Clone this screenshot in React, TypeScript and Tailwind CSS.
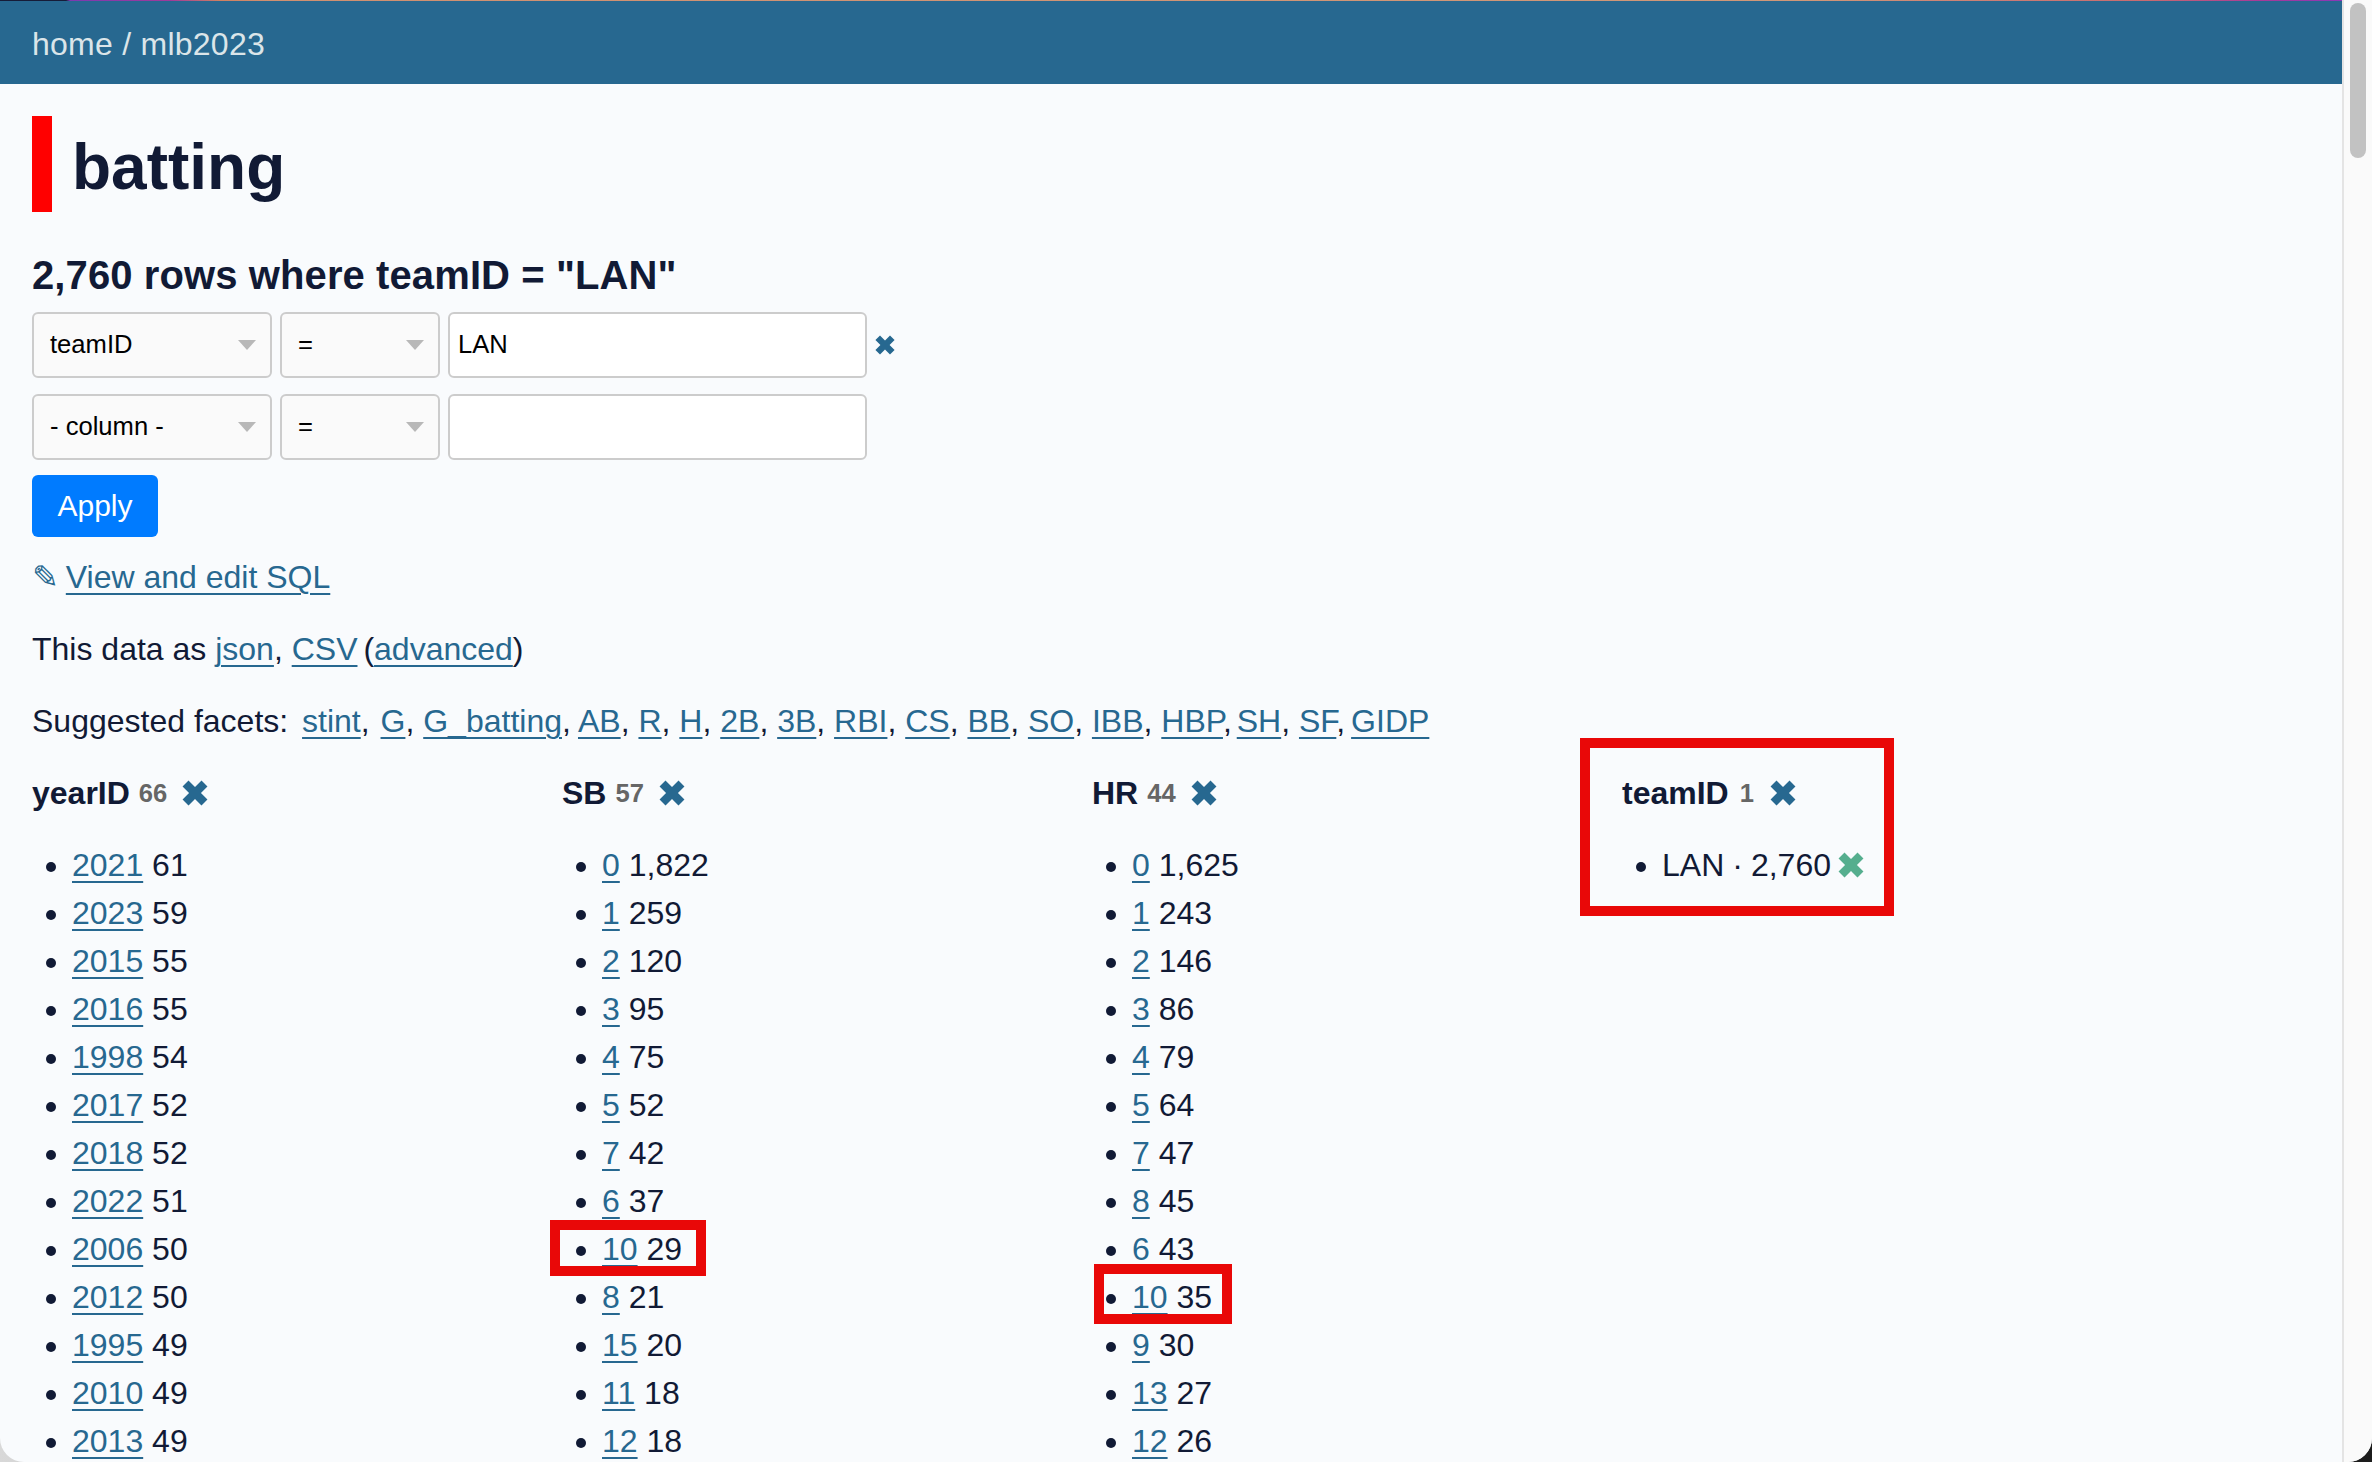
import React from 'react';

const yearFacet = [
  ['2021', '61'], ['2023', '59'], ['2015', '55'], ['2016', '55'], ['1998', '54'], ['2017', '52'], ['2018', '52'],
  ['2022', '51'], ['2006', '50'], ['2012', '50'], ['1995', '49'], ['2010', '49'], ['2013', '49'],
];
const sbFacet = [
  ['0', '1,822'], ['1', '259'], ['2', '120'], ['3', '95'], ['4', '75'], ['5', '52'], ['7', '42'],
  ['6', '37'], ['10', '29'], ['8', '21'], ['15', '20'], ['11', '18'], ['12', '18'],
];
const hrFacet = [
  ['0', '1,625'], ['1', '243'], ['2', '146'], ['3', '86'], ['4', '79'], ['5', '64'], ['7', '47'],
  ['8', '45'], ['6', '43'], ['10', '35'], ['9', '30'], ['13', '27'], ['12', '26'],
];
const suggested = ['stint', 'G', 'G_batting', 'AB', 'R', 'H', '2B', '3B', 'RBI', 'CS', 'BB', 'SO', 'IBB', 'HBP', 'SH', 'SF', 'GIDP'];

const linkClass = 'text-[#276890] underline decoration-2 underline-offset-[5px]';

const Cross: React.FC<{ className?: string }> = ({ className }) => (
  <svg viewBox="0 0 24 24" className={className} fill="currentColor">
    <path d="M6 0.5 L12 6.5 L18 0.5 L23.5 6 L17.5 12 L23.5 18 L18 23.5 L12 17.5 L6 23.5 L0.5 18 L6.5 12 L0.5 6 Z" />
  </svg>
);

const SelectBox: React.FC<{ label: string; className: string }> = ({ label, className }) => (
  <div className={`flex h-[66px] items-center justify-between rounded-[6px] border-2 border-[#cccccc] bg-[#fafafa] pb-[2px] pl-[16px] pr-[14px] text-[25.6px] text-black ${className}`}>
    <span>{label}</span>
    <svg viewBox="0 0 18 10" className="mt-[2px] h-[10px] w-[18px]" fill="#b8b8b8">
      <path d="M0 0 H18 L9 10 Z" />
    </svg>
  </div>
);

const FilterRow: React.FC<{ column: string; value?: string; removable?: boolean }> = ({ column, value, removable }) => (
  <div className="flex items-center gap-[8px]">
    <SelectBox label={column} className="w-[240px]" />
    <SelectBox label="=" className="w-[160px]" />
    <div className="flex h-[66px] w-[419px] items-center rounded-[6px] border-2 border-[#cccccc] bg-white pb-[2px] pl-[8px] text-[25.6px] text-black">
      {value}
    </div>
    {removable && <Cross className="h-[20px] w-[20px] text-[#276890]" />}
  </div>
);

const Facet: React.FC<{ name: string; total: string; items: string[][] }> = ({ name, total, items }) => (
  <div className="w-[530px] shrink-0">
    <div className="flex h-[48px] items-center font-bold">
      <span>{name}</span>
      <span className="ml-[9px] text-[25.6px] text-[#666666]">{total}</span>
      <Cross className="ml-[15px] h-[26px] w-[26px] text-[#276890]" />
    </div>
    <ul className="mt-[24px] list-disc pl-[40px]">
      {items.map(([value, count]) => (
        <li key={value} className="h-[48px] leading-[48px]">
          <a className={linkClass}>{value}</a> {count}
        </li>
      ))}
    </ul>
  </div>
);

export default function App() {
  return (
    <div className="relative h-[1462px] w-[2372px] overflow-hidden bg-gradient-to-r from-[#d8d8d8] to-[#1c1c1c] font-['Liberation_Sans',Arial,sans-serif] text-[32px] text-[#111a35]">
      <div className="flex h-full overflow-hidden rounded-b-[24px] bg-[#f9fbfd]">
        <div className="w-[2342px] shrink-0">
          <div className="h-[1px] bg-[linear-gradient(to_right,#161c38_0,#161c38_66px,#7c3ab0_70px,#a03a9a_170px,#d08060_220px,#d09070_270px,#d09878_1800px,#c86a70_2150px,#a83a98_2260px,#8038c0_2372px)]" />
          <div className="flex h-[83px] items-center bg-[#276890] pl-[32px] pt-[2px] tracking-[0.25px] text-[#dbe5e9]">home / mlb2023</div>

          <div className="px-[32px] pt-[32px]">
            <h1 className="flex h-[96px] items-center border-l-[20px] border-[#ff0000] pl-[20px] pt-[5px] text-[64px] font-bold">batting</h1>
            <h3 className="mt-[40px] h-[48px] text-[40px] font-bold leading-[46px] tracking-[0.1px]">2,760 rows where teamID = &quot;LAN&quot;</h3>

            <div className="mt-[12px] flex flex-col gap-[16px]">
              <FilterRow column="teamID" value="LAN" removable />
              <FilterRow column="- column -" />
            </div>

            <div className="mt-[15px] flex h-[62px] w-[126px] items-center justify-center rounded-[6px] bg-[#007bff] pb-[2px] text-[30px] text-white">Apply</div>

            <p className="mt-[16px] h-[48px] leading-[48px]">
              <span className="mr-[7px] font-['DejaVu_Sans',sans-serif] text-[32px] text-[#276890]">✎</span>
              <a className={linkClass}>View and edit SQL</a>
            </p>
            <p className="mt-[24px] h-[48px] leading-[48px]">
              This data as <a className={linkClass}>json</a>, <a className={linkClass}>CSV</a> <span className="-ml-[3px]">(</span><a className={linkClass}>advanced</a>)
            </p>
            <p className="mt-[24px] h-[48px] leading-[48px]">
              Suggested facets:{' '}
              {suggested.map((name, i) => (
                <React.Fragment key={name}>
                  <a className={`${linkClass} ${i === 0 ? 'ml-[5px]' : ''} ${name === 'G' ? 'ml-[2px]' : ''} ${name === 'SH' ? '-ml-[4px]' : ''} ${name === 'GIDP' ? '-ml-[3px]' : ''}`}>{name}</a>
                  {i < suggested.length - 1 ? ', ' : ''}
                </React.Fragment>
              ))}
            </p>

            <div className="mt-[24px] flex">
              <Facet name="yearID" total="66" items={yearFacet} />
              <Facet name="SB" total="57" items={sbFacet} />
              <Facet name="HR" total="44" items={hrFacet} />
              <div className="w-[300px] shrink-0">
                <div className="flex h-[48px] items-center font-bold">
                  <span>teamID</span>
                  <span className="ml-[11px] text-[25.6px] text-[#666666]">1</span>
                  <Cross className="ml-[16px] h-[26px] w-[26px] text-[#276890]" />
                </div>
                <ul className="mt-[24px] list-disc pl-[40px]">
                  <li className="h-[48px] leading-[48px]">
                    <span className="inline-flex items-center">
                      LAN<span className="mx-[8px]">·</span>2,760
                      <Cross className="ml-[7px] h-[26px] w-[26px] text-[#55ae8e]" />
                    </span>
                  </li>
                </ul>
              </div>
            </div>
          </div>
        </div>

        <div className="h-full flex-1 border-l-2 border-[#e4e4e4] bg-[#fafafa] pl-[6px] pr-[6px]">
          <div className="mt-[3px] h-[155px] w-[16px] rounded-full bg-[#c2c2c2]" />
        </div>
      </div>

      {/* annotation boxes drawn over the screenshot */}
      <div className="absolute left-[1580px] top-[738px] h-[178px] w-[314px] border-[10px] border-[#e90808]" />
      <div className="absolute left-[550px] top-[1220px] h-[56px] w-[156px] border-[10px] border-[#e90808]" />
      <div className="absolute left-[1094px] top-[1264px] h-[60px] w-[138px] border-[10px] border-[#e90808]" />
    </div>
  );
}
